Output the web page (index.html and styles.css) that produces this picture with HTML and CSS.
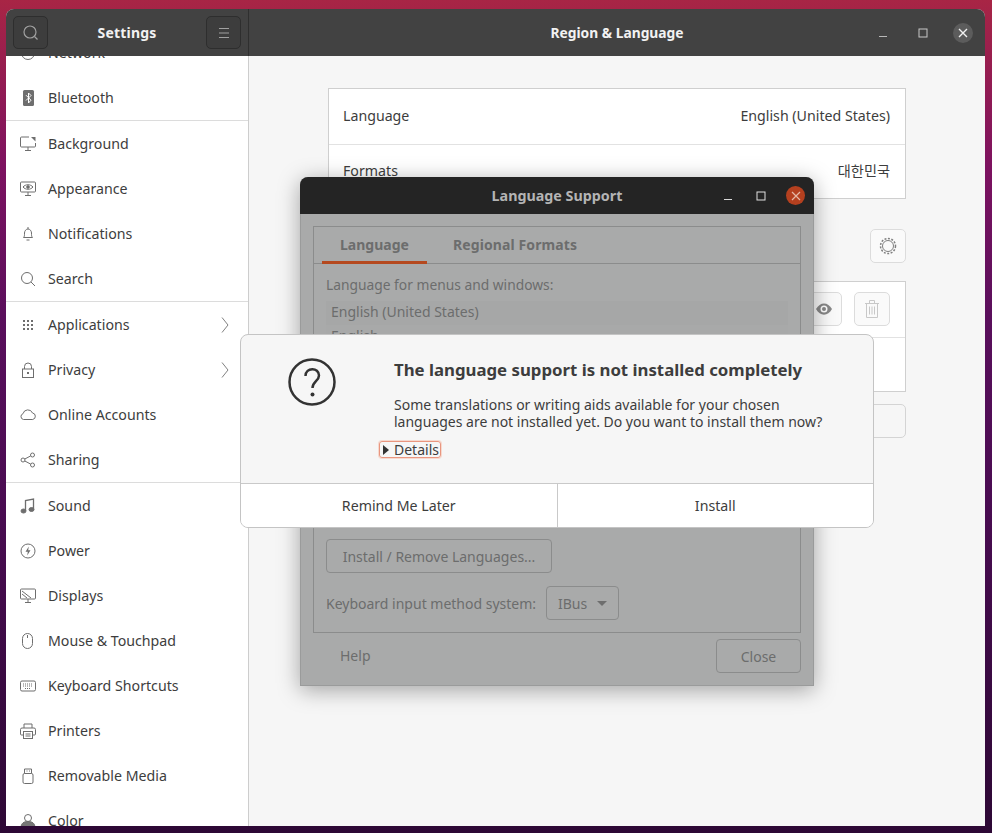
FILE: index.html
```html
<!DOCTYPE html>
<html lang="en">
<head>
    <meta charset="UTF-8">
    <title>Region &amp; Language</title>
    <link rel="stylesheet" href="styles.css">
</head>
<body>
<div class="desktop">
    <div class="window">
        <div class="headerbar">
            <div class="header-left">
                <div class="hb-btn"><svg width="20" height="20" viewBox="0 0 20 20" fill="none" stroke="#a0a0a0" stroke-width="1.2"><circle cx="9" cy="9" r="6"/><path d="M13.5 13.5l3 3"/></svg></div>
                <div class="hb-title">Settings</div>
                <div class="hb-btn"><svg width="16" height="16" viewBox="0 0 16 16" stroke="#a0a0a0" stroke-width="1"><path d="M3 3.500h10M3 8h10M3 12.500h10"/></svg></div>
            </div>
            <div class="header-right">
                <div></div>
                <div class="hb-title main-title">Region &amp; Language</div>
                <div class="win-controls">
                    <svg class="win-min" width="10" height="10" viewBox="0 0 10 10" stroke="#b8b8b8"><path d="M1 8.500h8"/></svg>
                    <svg width="10" height="10" viewBox="0 0 10 10" fill="none" stroke="#c8c8c8"><rect x="1" y="1" width="8" height="8"/></svg>
                    <div class="win-close"><svg width="10" height="10" viewBox="0 0 10 10" stroke="#f2f2f2" stroke-width="1.400"><path d="M1 1l8 8M9 1l-8 8"/></svg></div>
                </div>
            </div>
        </div>
        <div class="window-body">
            <div class="sidebar">
                <div class="side-list">
                    <div class="side-item"><svg class="ico" viewBox="0 0 16 16"><circle cx="8" cy="8" r="6.500"/></svg>Network</div>
                    <div class="side-item"><svg class="ico" viewBox="0 0 16 16"><rect x="3" y="0" width="11" height="16" rx="1.500" fill="#6e6e6e" stroke="none"/><path d="M6 5.200l5 5L8.500 13V3L11 5.500l-5 5" stroke="#fff"/></svg>Bluetooth</div>
                    <div class="side-sep"></div>
                    <div class="side-item"><svg class="ico" viewBox="0 0 16 16"><path d="M9 1H1.500a1 1 0 0 0-1 1v8a1 1 0 0 0 1 1h13a1 1 0 0 0 1-1V7M5 14.500h6M8 11v3.500"/><path d="M11 1h4.500v4.500z" fill="#6e6e6e" stroke="none"/></svg>Background</div>
                    <div class="side-item"><svg class="ico" viewBox="0 0 16 16"><rect x=".5" y="1" width="15" height="10" rx="1"/><path d="M5 14.500h6M8 11v3.500M3 6c2.500-3 7.500-3 10 0-2.500 3-7.500 3-10 0z"/><circle cx="8" cy="6" r="1.300" fill="#6e6e6e"/></svg>Appearance</div>
                    <div class="side-item"><svg class="ico" viewBox="0 0 16 16"><path d="M3.500 11.500c1-1 1-2 1-4.500 0-2 1.500-4 3.500-4s3.500 2 3.500 4c0 2.500 0 3.500 1 4.500zM6.500 14h3M8 1v2"/></svg>Notifications</div>
                    <div class="side-item"><svg class="ico" viewBox="0 0 16 16"><circle cx="7" cy="7" r="5.500"/><path d="M11 11l4 4"/></svg>Search</div>
                    <div class="side-sep"></div>
                    <div class="side-item"><svg class="ico" viewBox="0 0 16 16"><path class="dots" d="M3 3h2v2H3zM7 3h2v2H7zM11 3h2v2h-2zM3 7h2v2H3zM7 7h2v2H7zM11 7h2v2h-2zM3 11h2v2H3zM7 11h2v2H7zM11 11h2v2h-2z"/></svg>Applications<svg class="chev" width="9" height="16" viewBox="0 0 9 16"><path d="M1 .5L7 8l-6 7.500"/></svg></div>
                    <div class="side-item"><svg class="ico" viewBox="0 0 16 16"><rect x="2.500" y="7" width="11" height="8.500"/><path d="M4.500 7V4.500a3.500 3.500 0 0 1 7 0V7"/><rect x="7" y="10" width="2" height="2" fill="#6e6e6e" stroke="none"/></svg>Privacy<svg class="chev" width="9" height="16" viewBox="0 0 9 16"><path d="M1 .5L7 8l-6 7.500"/></svg></div>
                    <div class="side-item"><svg class="ico" viewBox="0 0 16 16"><path d="M3.500 12.500a3 3 0 0 1-.5-5.800 5 5 0 0 1 9.500-.7 3.300 3.300 0 0 1 .2 6.500z"/></svg>Online Accounts</div>
                    <div class="side-item"><svg class="ico" viewBox="0 0 16 16"><circle cx="3" cy="8" r="2"/><circle cx="12.500" cy="3" r="2"/><circle cx="12.500" cy="13" r="2"/><path d="M4.800 7l5.900-3.100M4.800 9l5.900 3.100"/></svg>Sharing</div>
                    <div class="side-sep"></div>
                    <div class="side-item"><svg class="ico" viewBox="0 0 16 16"><path d="M5.500 13V2.500l8-1.500v10.500" stroke-width="1.300"/><ellipse cx="3.500" cy="13" rx="2.500" ry="2" fill="#6e6e6e"/><ellipse cx="11.500" cy="11.500" rx="2.500" ry="2" fill="#6e6e6e"/></svg>Sound</div>
                    <div class="side-item"><svg class="ico" viewBox="0 0 16 16"><circle cx="8" cy="8" r="7"/><path d="M8.800 3.500L5.500 8.800h2.300l-.6 3.700 3.300-5.300H8.200z" fill="#6e6e6e" stroke="none"/></svg>Power</div>
                    <div class="side-item"><svg class="ico" viewBox="0 0 16 16"><rect x=".5" y="1" width="15" height="10" rx="1"/><path d="M5 14.500h6M8 11v3.500M2 3l9 7M2 6l5 4"/></svg>Displays</div>
                    <div class="side-item"><svg class="ico" viewBox="0 0 16 16"><rect x="2.500" y=".5" width="10" height="15" rx="5"/><path d="M7.500 2v3"/></svg>Mouse &amp; Touchpad</div>
                    <div class="side-item"><svg class="ico" viewBox="0 0 16 16"><rect x=".5" y="3" width="15" height="10" rx="1.500"/><path d="M3 6h10M3 8h10M5 10.500h6" stroke-dasharray="1 1"/></svg>Keyboard Shortcuts</div>
                    <div class="side-item"><svg class="ico" viewBox="0 0 16 16"><path d="M4 5V1h8v4M3.500 12H1.500a1 1 0 0 1-1-1V6.500a1.500 1.500 0 0 1 1.500-1.500h12a1.500 1.500 0 0 1 1.500 1.500V11a1 1 0 0 1-1 1h-2"/><rect x="3.500" y="8.500" width="9" height="7"/><path d="M5.500 11h5M5.500 13h5"/></svg>Printers</div>
                    <div class="side-item"><svg class="ico" viewBox="0 0 16 16"><rect x="3" y="5.500" width="10" height="10" rx="1.500"/><path d="M4.500 5.500V1h7v4.500M6.500 3h1M9 3h1"/></svg>Removable Media</div>
                    <div class="side-item"><svg class="ico" viewBox="0 0 16 16"><circle cx="8" cy="5" r="3.500"/><path d="M1 15c0-5 3-6.500 7-6.500s7 1.500 7 6.500z" fill="#777"/></svg>Color</div>
                </div>
            </div>
            <div class="content">
                <div class="panel">
                    <div class="panel-row">Language<span>English (United States)</span></div>
                    <div class="panel-row">Formats<span>대한민국</span></div>
                </div>
                <div class="gear-row">
                    <div class="tool-btn"><svg width="18" height="18" viewBox="0 0 18 18" fill="none" stroke="#808080"><circle cx="9" cy="9" r="5.500"/><circle cx="9" cy="9" r="7.500" stroke-dasharray="2 1.500" stroke-width="1.500"/></svg></div>
                </div>
                <div class="panel">
                    <div class="panel-row source-row">
                        <div class="tool-btn"><svg width="18" height="14" viewBox="0 0 18 14"><path d="M1 7c4-7.500 12-7.500 16 0-4 7.500-12 7.500-16 0z" fill="#888"/><circle cx="9" cy="7" r="3.500" fill="#fff"/><circle cx="9" cy="7" r="2" fill="#888"/></svg></div>
                        <div class="tool-btn"><svg width="16" height="20" viewBox="0 0 16 20" fill="none" stroke="#c8c8c8"><path d="M1 4.500h14M5.500 4.500v-3h5v3M2.500 4.500v14h11v-14M5.500 7.500v8M8 7.500v8M10.500 7.500v8"/></svg></div>
                    </div>
                    <div class="panel-row"></div>
                </div>
                <div class="wide-btn"></div>
            </div>
        </div>
    </div>

    <!-- dimmed parent dialog -->
    <div class="lang-dialog">
        <div class="lang-titlebar">
            <div class="lang-title">Language Support</div>
            <div class="lang-controls">
                <svg width="10" height="10" viewBox="0 0 10 10" stroke="#d8d8d8"><path d="M1 8.500h8"/></svg>
                <svg width="10" height="10" viewBox="0 0 10 10" fill="none" stroke="#e0e0e0"><rect x="1" y="1" width="8" height="8"/></svg>
                <div class="lang-close"><svg width="10" height="10" viewBox="0 0 10 10" stroke="#e6b8a6" stroke-width="1.200"><path d="M1 1l8 8M9 1l-8 8"/></svg></div>
            </div>
        </div>
        <div class="lang-body">
            <div class="notebook">
                <div class="tabs">
                    <div class="tab tab-active">Language</div>
                    <div class="tab tab-second">Regional Formats</div>
                </div>
                <div class="tab-page">
                    <div class="dim-label">Language for menus and windows:</div>
                    <div class="lang-list">
                        <div class="lang-item first">English (United States)</div>
                        <div class="lang-item">English</div>
                    </div>
                    <div class="dim-btn install-btn">Install / Remove Languages...</div>
                    <div class="input-row">
                        Keyboard input method system:
                        <div class="dim-btn combo">IBus<svg width="10" height="5" viewBox="0 0 10 5"><path d="M0 0h10L5 5z" fill="#6e6e6e"/></svg></div>
                    </div>
                </div>
            </div>
            <div class="lang-footer">
                <span class="help">Help</span>
                <div class="dim-btn close-btn">Close</div>
            </div>
        </div>
    </div>

    <!-- message dialog -->
    <div class="msg-dialog">
        <div class="msg-main">
            <svg class="msg-icon" width="48" height="48" viewBox="0 0 48 48" fill="none" stroke="#333" stroke-width="2.500"><circle cx="24" cy="24" r="22.500"/><path d="M17.500 18c0-9 13.500-9 13.500-.5 0 5.500-6.500 6-6.500 12.500"/><circle cx="24.500" cy="36.500" r="2" fill="#333" stroke="none"/></svg>
            <div class="msg-text">
                <div class="msg-title">The language support is not installed completely</div>
                <div class="msg-desc">Some translations or writing aids available for your chosen<br>languages are not installed yet. Do you want to install them now?</div>
                <div class="details"><i class="arrow"></i>Details</div>
            </div>
        </div>
        <div class="msg-actions">
            <div class="msg-btn">Remind Me Later</div>
            <div class="msg-btn">Install</div>
        </div>
    </div>
</div>
</body>
</html>
```

FILE: styles.css
```css
* {
    box-sizing: border-box;
}
html, body {
    margin: 0;
    padding: 0;
}
body {
    font-family: "Noto Sans", "Noto Sans CJK KR", sans-serif;
    font-size: 14px;
    color: #3d3d3d;
}
.desktop {
    position: relative;
    width: 992px;
    height: 833px;
    overflow: hidden;
    padding: 9px 7px 7px 6px;
    background: linear-gradient(180deg, #a82545 0%, #7d1260 20%, #5a0f5c 38%, #4a0c52 60%, #3a0a42 82%, #2d0835 100%);
}
.window {
    display: flex;
    flex-direction: column;
    height: 100%;
    border-radius: 8px 8px 0 0;
    overflow: hidden;
    background: #f6f6f6;
}

/* header */
.headerbar {
    display: flex;
    flex: 0 0 47px;
    background: #424242;
    color: #f2f2f2;
}
.header-left {
    display: flex;
    align-items: center;
    justify-content: space-between;
    width: 243px;
    padding: 0 7px;
    border-right: 1px solid #2f2f2f;
}
.header-right {
    display: grid;
    grid-template-columns: 1fr auto 1fr;
    flex: 1;
    align-items: center;
}
.hb-btn {
    display: flex;
    align-items: center;
    justify-content: center;
    width: 35px;
    height: 33px;
    background: #3d3d3d;
    border: 1px solid #2e2e2e;
    border-radius: 5px;
}
.hb-title {
    font-weight: 700;
    font-size: 14px;
    letter-spacing: .2px;
}
.main-title {
    letter-spacing: 0;
    font-size: 13.800px;
}
.win-controls {
    display: flex;
    align-items: center;
    justify-content: flex-end;
    gap: 25px;
    padding-right: 12px;
}
.win-min {
    margin-right: 5px;
}
.win-close {
    display: flex;
    align-items: center;
    justify-content: center;
    width: 20px;
    height: 20px;
    border-radius: 50%;
    background: #5c5c5c;
}

/* sidebar */
.window-body {
    display: flex;
    flex: 1;
    min-height: 0;
}
.sidebar {
    width: 243px;
    overflow: hidden;
    background: #fff;
    border-right: 1px solid #cdcdcd;
}
.side-list {
    margin-top: -26px;
}
.side-item {
    display: flex;
    align-items: center;
    height: 45px;
    padding: 0 18px 0 14px;
    font-size: 14.200px;
}
.side-sep {
    height: 1px;
    background: #dcdcdc;
}
.ico {
    flex: none;
    width: 16px;
    height: 16px;
    margin-right: 12px;
    fill: none;
    stroke: #6e6e6e;
    stroke-width: 1;
}
.dots {
    fill: #6e6e6e;
    stroke: none;
}
.chev {
    margin-left: auto;
    fill: none;
    stroke: #808080;
}

/* content */
.content {
    flex: 1;
    padding: 32px 79px 0;
}
.panel {
    background: #fff;
    border: 1px solid #cfcfcf;
}
.panel-row {
    display: flex;
    align-items: center;
    justify-content: space-between;
    height: 54.500px;
    padding: 0 15px 2px 14px;
    font-size: 14.200px;
}
.panel-row + .panel-row {
    border-top: 1px solid #e2e2e2;
}
.gear-row {
    display: flex;
    justify-content: flex-end;
    margin: 30px 0 18px;
}
.tool-btn {
    display: flex;
    align-items: center;
    justify-content: center;
    width: 36px;
    height: 34px;
    background: #fafafa;
    border: 1px solid #dcdcdc;
    border-radius: 5px;
}
.source-row {
    justify-content: flex-end;
    gap: 12px;
    padding-bottom: 0;
}
.wide-btn {
    height: 34px;
    margin-top: 12px;
    background: #f6f6f6;
    border: 1px solid #d4d4d4;
    border-radius: 5px;
}

/* language support dialog */
.lang-dialog {
    position: absolute;
    left: 300px;
    top: 177px;
    width: 514px;
    height: 509px;
    display: flex;
    flex-direction: column;
    border-radius: 8px 8px 0 0;
    background: #a9aaaa;
    color: #6c6d6d;
    box-shadow: 0 4px 22px rgba(0, 0, 0, .35);
}
.lang-titlebar {
    position: relative;
    display: flex;
    align-items: center;
    flex: 0 0 37px;
    border-radius: 8px 8px 0 0;
    background: #242424;
}
.lang-title {
    flex: 1;
    text-align: center;
    font-weight: 700;
    font-size: 14.300px;
    color: #b4b4b4;
}
.lang-controls {
    position: absolute;
    right: 9px;
    top: 9px;
    display: flex;
    align-items: center;
    gap: 23px;
}
.lang-close {
    display: flex;
    align-items: center;
    justify-content: center;
    width: 19px;
    height: 19px;
    margin-left: -3px;
    border-radius: 50%;
    background: #b5401f;
}
.lang-body {
    display: flex;
    flex: 1;
    flex-direction: column;
    padding: 12px 12px 0;
    border: 1px solid #9a9b9b;
    border-top: 0;
}
.notebook {
    height: 407px;
    border: 1px solid #8b8c8c;
}
.tabs {
    display: flex;
    gap: 6px;
    height: 37px;
    padding-left: 8px;
    border-bottom: 1px solid #8b8c8c;
}
.tab {
    padding: 0 18px;
    line-height: 35px;
    font-weight: 700;
    font-size: 14px;
}
.tab-second {
    margin-left: 2px;
    letter-spacing: .1px;
}
.tab-active {
    width: 105px;
    height: 37px;
    border-bottom: 3px solid #b5491f;
}
.tab-page {
    padding: 11px 12px 0;
}
.dim-label {
    height: 20px;
    line-height: 20px;
    font-size: 13.800px;
}
.lang-list {
    height: 228px;
    margin-top: 6px;
    background: #a8a9a9;
}
.lang-item {
    height: 24px;
    padding-left: 5px;
    line-height: 22px;
}
.lang-item.first {
    background: #a6a7a7;
}
.dim-btn {
    display: flex;
    align-items: center;
    justify-content: center;
    border: 1px solid #8b8c8c;
    border-radius: 4px;
}
.install-btn {
    width: 226px;
    height: 34px;
    margin-top: 10px;
}
.input-row {
    display: flex;
    align-items: center;
    gap: 10px;
    margin-top: 13px;
}
.combo {
    gap: 10px;
    width: 73px;
    height: 34px;
}
.lang-footer {
    display: flex;
    align-items: center;
    justify-content: space-between;
    padding: 6px 0 0 27px;
}
.help {
    margin-top: -2px;
}
.close-btn {
    width: 85px;
    height: 34px;
}

/* message dialog */
.msg-dialog {
    position: absolute;
    left: 240px;
    top: 334px;
    width: 634px;
    height: 194px;
    display: flex;
    flex-direction: column;
    border: 1px solid #c4c4c4;
    border-radius: 8px;
    background: #f6f6f6;
    overflow: hidden;
}
.msg-main {
    display: flex;
    flex: 1;
    padding: 23px 0 0 47px;
}
.msg-icon {
    flex: none;
    margin-right: 58px;
}
.msg-title {
    font-weight: 700;
    font-size: 16.800px;
    line-height: 24px;
}
.msg-desc {
    margin-top: 14px;
    line-height: 17px;
}
.details {
    display: flex;
    align-items: center;
    width: 62px;
    height: 17px;
    margin: 11px 0 0 -15px;
    padding-left: 3px;
    border: 1px solid #e9967f;
    border-radius: 3px;
    box-shadow: 0 0 0 1px #f6d9cf;
}
.arrow {
    flex: none;
    width: 0;
    height: 0;
    margin-right: 5px;
    border-left: 6px solid #333;
    border-top: 5px solid transparent;
    border-bottom: 5px solid transparent;
}
.msg-actions {
    display: flex;
    flex: 0 0 44px;
    background: #fff;
    border-top: 1px solid #c9c9c9;
    font-size: 14.200px;
}
.msg-btn {
    flex: 1;
    display: flex;
    align-items: center;
    justify-content: center;
}
.msg-btn + .msg-btn {
    border-left: 1px solid #c9c9c9;
}
```
